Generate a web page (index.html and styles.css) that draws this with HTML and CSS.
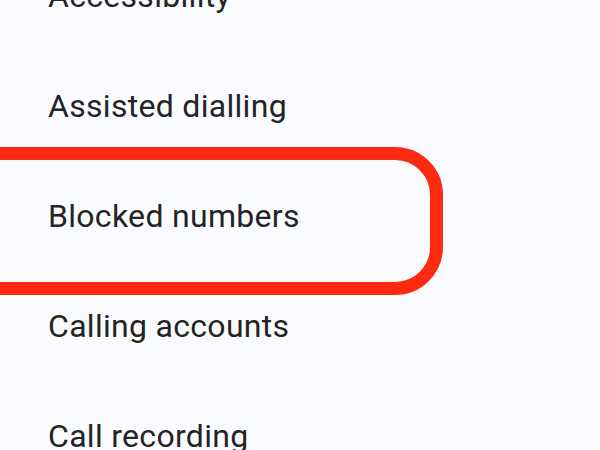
FILE: index.html
```html
<!DOCTYPE html>
<html lang="en">
<head>
    <meta charset="UTF-8">
    <meta name="viewport" content="width=device-width, initial-scale=1.0">
    <title>Call settings</title>
    <link rel="stylesheet" href="styles.css">
</head>
<body>
    <ul class="settings-list">
        <li class="settings-item">Accessibility</li>
        <li class="settings-item">Assisted dialling</li>
        <li class="settings-item highlighted">Blocked numbers</li>
        <li class="settings-item">Calling accounts</li>
        <li class="settings-item">Call recording</li>
    </ul>
</body>
</html>
```

FILE: styles.css
```css
* {
    margin: 0;
    padding: 0;
    box-sizing: border-box;
}

body {
    background-color: #fafbfe;
    color: #242424;
    font-family: Roboto, "Noto Sans", sans-serif;
    overflow: hidden;
}

.settings-list {
    list-style: none;
    margin-top: -59px;
}

.settings-item {
    position: relative;
    height: 110px;
    line-height: 110px;
    padding-left: 48px;
    font-size: 32px;
    letter-spacing: 0.3px;
    white-space: nowrap;
}

/* red marker drawn around the chosen row */
.highlighted::after {
    content: "";
    position: absolute;
    top: -14px;
    bottom: -24px;
    left: -60px;
    right: 157px;
    border: 13px solid #fc2a10;
    border-radius: 48px;
}
```
